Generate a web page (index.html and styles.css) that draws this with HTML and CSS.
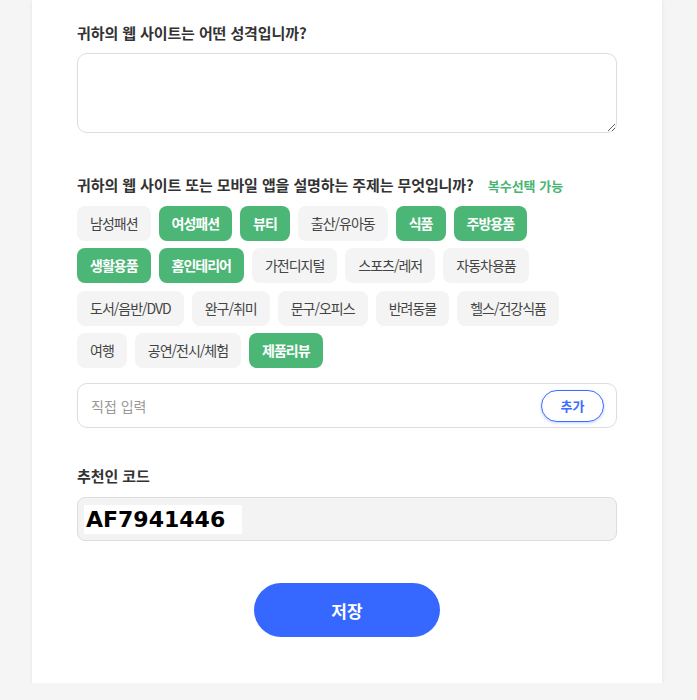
FILE: index.html
```html
<!DOCTYPE html>
<html lang="ko">
<head>
    <meta charset="UTF-8">
    <meta name="viewport" content="width=device-width, initial-scale=1.0">
    <title>사이트 정보</title>
    <link rel="stylesheet" href="styles.css">
</head>
<body>
    <div class="card">
        <div class="field">
            <div class="label">귀하의 웹 사이트는 어떤 성격입니까?</div>
            <textarea class="area"></textarea>
        </div>

        <div class="field topics">
            <div class="label">귀하의 웹 사이트 또는 모바일 앱을 설명하는 주제는 무엇입니까? <span class="multi">복수선택 가능</span></div>
            <div class="chips">
                <span class="chip">남성패션</span>
                <span class="chip on">여성패션</span>
                <span class="chip on">뷰티</span>
                <span class="chip">출산/유아동</span>
                <span class="chip on">식품</span>
                <span class="chip on">주방용품</span>
                <span class="chip on">생활용품</span>
                <span class="chip on">홈인테리어</span>
                <span class="chip">가전디지털</span>
                <span class="chip">스포츠/레저</span>
                <span class="chip">자동차용품</span>
                <span class="chip">도서/음반/DVD</span>
                <span class="chip">완구/취미</span>
                <span class="chip">문구/오피스</span>
                <span class="chip">반려동물</span>
                <span class="chip">헬스/건강식품</span>
                <span class="chip">여행</span>
                <span class="chip">공연/전시/체험</span>
                <span class="chip on">제품리뷰</span>
            </div>
            <div class="custom">
                <input type="text" placeholder="직접 입력">
                <button class="add">추가</button>
            </div>
        </div>

        <div class="field ref">
            <div class="label">추천인 코드</div>
            <div class="code"><span class="code-text">AF7941446</span></div>
        </div>

        <div class="actions">
            <button class="save">저장</button>
        </div>
    </div>
</body>
</html>
```

FILE: styles.css
```css
body {
    margin: 0;
    background: #f5f5f5;
    font-family: "Noto Sans CJK KR", "Noto Sans", sans-serif;
    color: #333;
}
.card {
    width: 540px;
    margin: 0 0 0 32px;
    padding: 22px 45px 46px;
    background: #fff;
    box-shadow: 0 1px 4px rgba(0, 0, 0, 0.08);
}
.label {
    font-size: 15px;
    font-weight: 700;
    line-height: 22px;
    letter-spacing: -0.1px;
    color: #333;
}
.multi {
    margin-left: 10px;
    font-size: 13px;
    color: #4ab573;
    letter-spacing: 0;
}
.area {
    display: block;
    box-sizing: border-box;
    width: 540px;
    height: 80px;
    margin-top: 9px;
    border: 1px solid #ddd;
    border-radius: 10px;
    resize: vertical;
    font-family: inherit;
}
.topics {
    margin-top: 41px;
}
.chips {
    display: flex;
    flex-wrap: wrap;
    gap: 7.4px 8px;
    max-width: 500px;
    margin-top: 9px;
}
.chip {
    height: 35px;
    line-height: 35px;
    padding: 0 13px;
    border-radius: 8px;
    background: #f4f4f4;
    font-size: 14px;
    color: #444;
    letter-spacing: -1px;
}
.chip.on {
    background: #4cb676;
    color: #fff;
    font-weight: 700;
}
.custom {
    display: flex;
    align-items: center;
    box-sizing: border-box;
    height: 45px;
    margin-top: 15px;
    padding: 0 12px 0 13px;
    border: 1px solid #ddd;
    border-radius: 10px;
}
.custom input {
    flex: 1;
    border: none;
    outline: none;
    padding: 0;
    font-family: inherit;
    font-size: 14px;
    color: #333;
}
.custom input::placeholder {
    color: #999;
}
.add {
    width: 63px;
    height: 32px;
    border: 1px solid #3d6dff;
    border-radius: 16px;
    background: #fff;
    box-shadow: 0 1px 3px rgba(61, 109, 255, 0.3);
    color: #3d6dff;
    font-family: inherit;
    font-size: 13px;
    font-weight: 700;
}
.ref {
    margin-top: 37px;
}
.code {
    box-sizing: border-box;
    height: 44px;
    margin-top: 10px;
    padding: 7px 6px;
    border: 1px solid #ddd;
    border-radius: 8px;
    background: #f3f3f3;
}
.code-text {
    display: inline-block;
    width: 156px;
    height: 29px;
    padding-left: 2px;
    background: #fff;
    font-family: "DejaVu Sans", Verdana, sans-serif;
    font-size: 22px;
    font-weight: 700;
    line-height: 29px;
    color: #000;
}
.actions {
    margin-top: 42px;
    text-align: center;
}
.save {
    width: 186px;
    height: 54px;
    border: none;
    border-radius: 27px;
    background: #3668ff;
    color: #fff;
    font-family: inherit;
    font-size: 17px;
    font-weight: 700;
}
```
